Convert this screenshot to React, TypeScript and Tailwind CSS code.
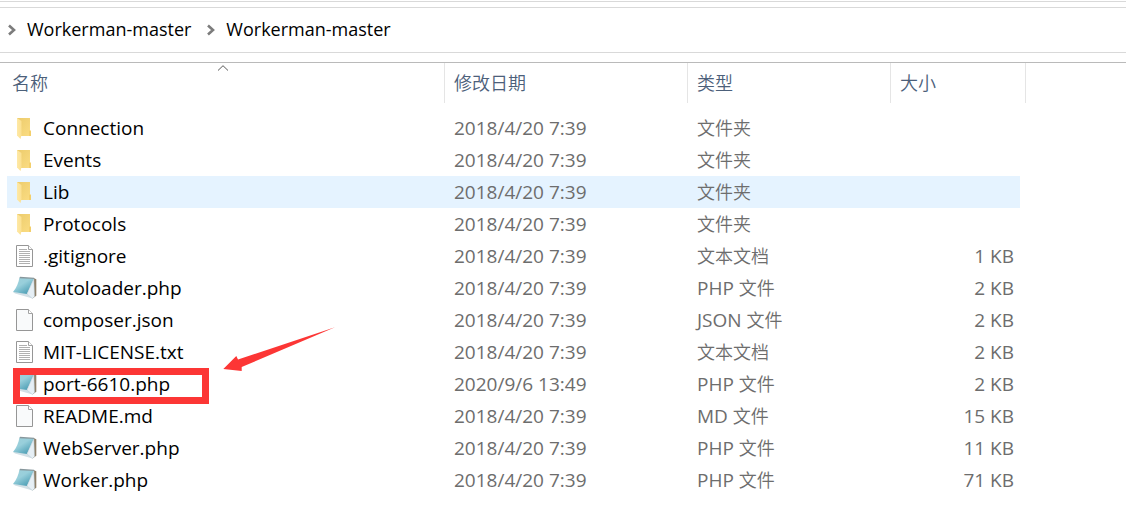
type Kind = 'folder' | 'text' | 'blank' | 'php';

interface Entry {
  name: string;
  date: string;
  ext?: string;
  type: string;
  size?: string;
  kind: Kind;
  hovered?: boolean;
  marked?: boolean;
}

const path = ['Workerman-master', 'Workerman-master'];

const entries: Entry[] = [
  { name: 'Connection', date: '2018/4/20 7:39', type: '文件夹', kind: 'folder' },
  { name: 'Events', date: '2018/4/20 7:39', type: '文件夹', kind: 'folder' },
  { name: 'Lib', date: '2018/4/20 7:39', type: '文件夹', kind: 'folder', hovered: true },
  { name: 'Protocols', date: '2018/4/20 7:39', type: '文件夹', kind: 'folder' },
  { name: '.gitignore', date: '2018/4/20 7:39', type: '文本文档', size: '1 KB', kind: 'text' },
  { name: 'Autoloader.php', date: '2018/4/20 7:39', ext: 'PHP', type: '文件', size: '2 KB', kind: 'php' },
  { name: 'composer.json', date: '2018/4/20 7:39', ext: 'JSON', type: '文件', size: '2 KB', kind: 'blank' },
  { name: 'MIT-LICENSE.txt', date: '2018/4/20 7:39', type: '文本文档', size: '2 KB', kind: 'text' },
  { name: 'port-6610.php', date: '2020/9/6 13:49', ext: 'PHP', type: '文件', size: '2 KB', kind: 'php', marked: true },
  { name: 'README.md', date: '2018/4/20 7:39', ext: 'MD', type: '文件', size: '15 KB', kind: 'blank' },
  { name: 'WebServer.php', date: '2018/4/20 7:39', ext: 'PHP', type: '文件', size: '11 KB', kind: 'php' },
  { name: 'Worker.php', date: '2018/4/20 7:39', ext: 'PHP', type: '文件', size: '71 KB', kind: 'php' },
];

function FolderIcon() {
  return (
    <svg viewBox="0 0 24 24" className="size-6 shrink-0" aria-hidden="true">
      <path d="M4 2h13v12l1 1v5H7L4 18z" fill="url(#folderBack)" />
      <path d="M16 14.500l2 .5v5h-2z" fill="#f3cf6c" />
      <path d="M4 2l4.500 3v14L7.500 23 4 19.500z" fill="url(#folderFront)" />
    </svg>
  );
}

function PageIcon({ lines }: { lines?: boolean }) {
  return (
    <svg viewBox="0 0 24 24" className="size-6 shrink-0" aria-hidden="true">
      <path d="M3.500 1.500h12l4 4v17h-16z" fill={lines ? '#fff' : '#f9fafb'} stroke="#969696" />
      <path d="M15.500 1.500v4h4" fill="#fff" stroke="#a3a3a3" />
      {lines && (
        <path
          d="M6 5.500h8M6 7.500h11M6 9.500h11M6 11.500h11M6 13.500h11M6 15.500h11M6 17.500h11M6 19.500h11"
          stroke="#b0b0b0"
        />
      )}
    </svg>
  );
}

function NotepadIcon() {
  return (
    <svg viewBox="0 0 24 24" className="size-6 shrink-0" aria-hidden="true">
      <path d="M20.500 2l2.800 1.300v16.500L19.500 22.500z" fill="#8f8069" />
      <path d="M0 16l14 1 5.500 5.500L2 17.500z" fill="#d3e0e6" />
      <path d="M6.500 1.500L21 2.500 14 18 0 16C3.500 12 5.500 7 6.500 1.500z" fill="url(#notepadCover)" />
      <path d="M20.800 2.800L14 18l5.500 4.500 2-2z" fill="#e6eff5" stroke="#b7c8d3" strokeWidth=".5" />
      <path d="M7 .8l14 1 .5 1.200L6.500 2.200z" fill="#87979c" />
    </svg>
  );
}

function FileIcon({ kind }: { kind: Kind }) {
  if (kind === 'folder') return <FolderIcon />;
  if (kind === 'php') return <NotepadIcon />;
  return <PageIcon lines={kind === 'text'} />;
}

// gradients shared by all the row icons
function IconDefs() {
  return (
    <svg className="absolute size-0" aria-hidden="true">
      <defs>
        <linearGradient id="folderBack" x1="0" y1="0" x2="1" y2="1">
          <stop offset="0" stopColor="#eccb6c" />
          <stop offset="1" stopColor="#fbdd83" />
        </linearGradient>
        <linearGradient id="folderFront" x1="0" y1="0" x2="1" y2="0">
          <stop offset="0" stopColor="#ffe9a6" />
          <stop offset="1" stopColor="#fbe091" />
        </linearGradient>
        <linearGradient id="notepadCover" x1="0" y1="0" x2=".8" y2="1">
          <stop offset="0" stopColor="#9fd0da" />
          <stop offset=".45" stopColor="#98cfdb" />
          <stop offset="1" stopColor="#4398b0" />
        </linearGradient>
      </defs>
    </svg>
  );
}

function Marker() {
  return (
    <>
      <div className="absolute top-0 left-1.5 h-9 w-[196px] border-[7px] border-[#fc3635]" />
      <svg viewBox="0 0 112 46" className="absolute bottom-7 left-[216px] h-[46px] w-28" aria-hidden="true">
        <path d="M.3 43L13.300 30 15 33.500 112 1.300 18.700 41v4z" fill="#fc3635" />
      </svg>
    </>
  );
}

function Breadcrumb() {
  return (
    <nav className="mt-[5px] flex h-[46px] items-center gap-4 border-y border-[#d9d9d9] pl-2">
      {path.map((part, i) => (
        <div key={i} className="flex items-center gap-[11px]">
          <svg viewBox="0 0 8 12" className="h-3 w-2" aria-hidden="true">
            <path d="M1 1.500L6 6 1 10.500" fill="none" stroke="#7c7c7c" strokeWidth="2.600" />
          </svg>
          <a href="#" className="pb-0.5 text-lg leading-6 text-black">
            {part}
          </a>
        </div>
      ))}
    </nav>
  );
}

export default function App() {
  return (
    <div className="min-h-screen bg-white pt-px font-['Open_Sans','Noto_Sans_CJK_SC',sans-serif]">
      <IconDefs />
      <div className="border-t border-[#d9d9d9]" />
      <Breadcrumb />

      <main className="mt-[9px] border-t border-[#bababa] pl-[7px]">
        <table className="w-[1019px] table-fixed border-collapse text-left">
          <colgroup>
            <col className="w-[438px]" />
            <col className="w-[243px]" />
            <col className="w-[203px]" />
            <col className="w-[129px]" />
            <col className="w-[6px]" />
          </colgroup>
          <thead className="text-lg leading-6 text-[#4c607a]">
            <tr>
              <th className="relative p-0 pb-[9px] font-[350]">
                <div className="flex h-10 items-center border-r border-[#e5e5e5] pl-[5px]">名称</div>
                <svg viewBox="0 0 12 6" className="absolute top-0.5 left-[210px] h-1.5 w-3" aria-hidden="true">
                  <path d="M1 5.500L6 .7l5 4.800" fill="none" stroke="#5a5a5a" />
                </svg>
              </th>
              <th className="p-0 pb-[9px] font-[350]">
                <div className="flex h-10 items-center border-r border-[#e5e5e5] pl-[9px]">修改日期</div>
              </th>
              <th className="p-0 pb-[9px] font-[350]">
                <div className="flex h-10 items-center border-r border-[#e5e5e5] pl-[9px]">类型</div>
              </th>
              <th colSpan={2} className="p-0 pb-[9px] font-[350]">
                <div className="flex h-10 items-center border-r border-[#e5e5e5] pl-[9px]">大小</div>
              </th>
            </tr>
          </thead>
          <tbody className="text-[19px] leading-6 text-[#6d6d6d]">
            {entries.map((entry) => {
              const bg = entry.hovered ? 'bg-[#e5f3ff]' : '';
              return (
                <tr key={entry.name} className="h-8">
                  <td className={`relative p-0 ${bg}`}>
                    <div className="flex h-8 items-center gap-1.5 pl-1.5 text-black">
                      <FileIcon kind={entry.kind} />
                      <span>{entry.name}</span>
                    </div>
                    {entry.marked && <Marker />}
                  </td>
                  <td className={`p-0 pl-[9px] ${bg}`}>{entry.date}</td>
                  <td className={`p-0 pl-[9px] text-lg leading-6 font-[350] ${bg}`}>
                    {entry.ext && <span className="text-[19px] leading-6 font-normal">{entry.ext} </span>}
                    {entry.type}
                  </td>
                  <td className={`p-0 pr-1.5 text-right ${bg}`}>{entry.size}</td>
                  <td className="p-0" />
                </tr>
              );
            })}
          </tbody>
        </table>
      </main>
    </div>
  );
}
